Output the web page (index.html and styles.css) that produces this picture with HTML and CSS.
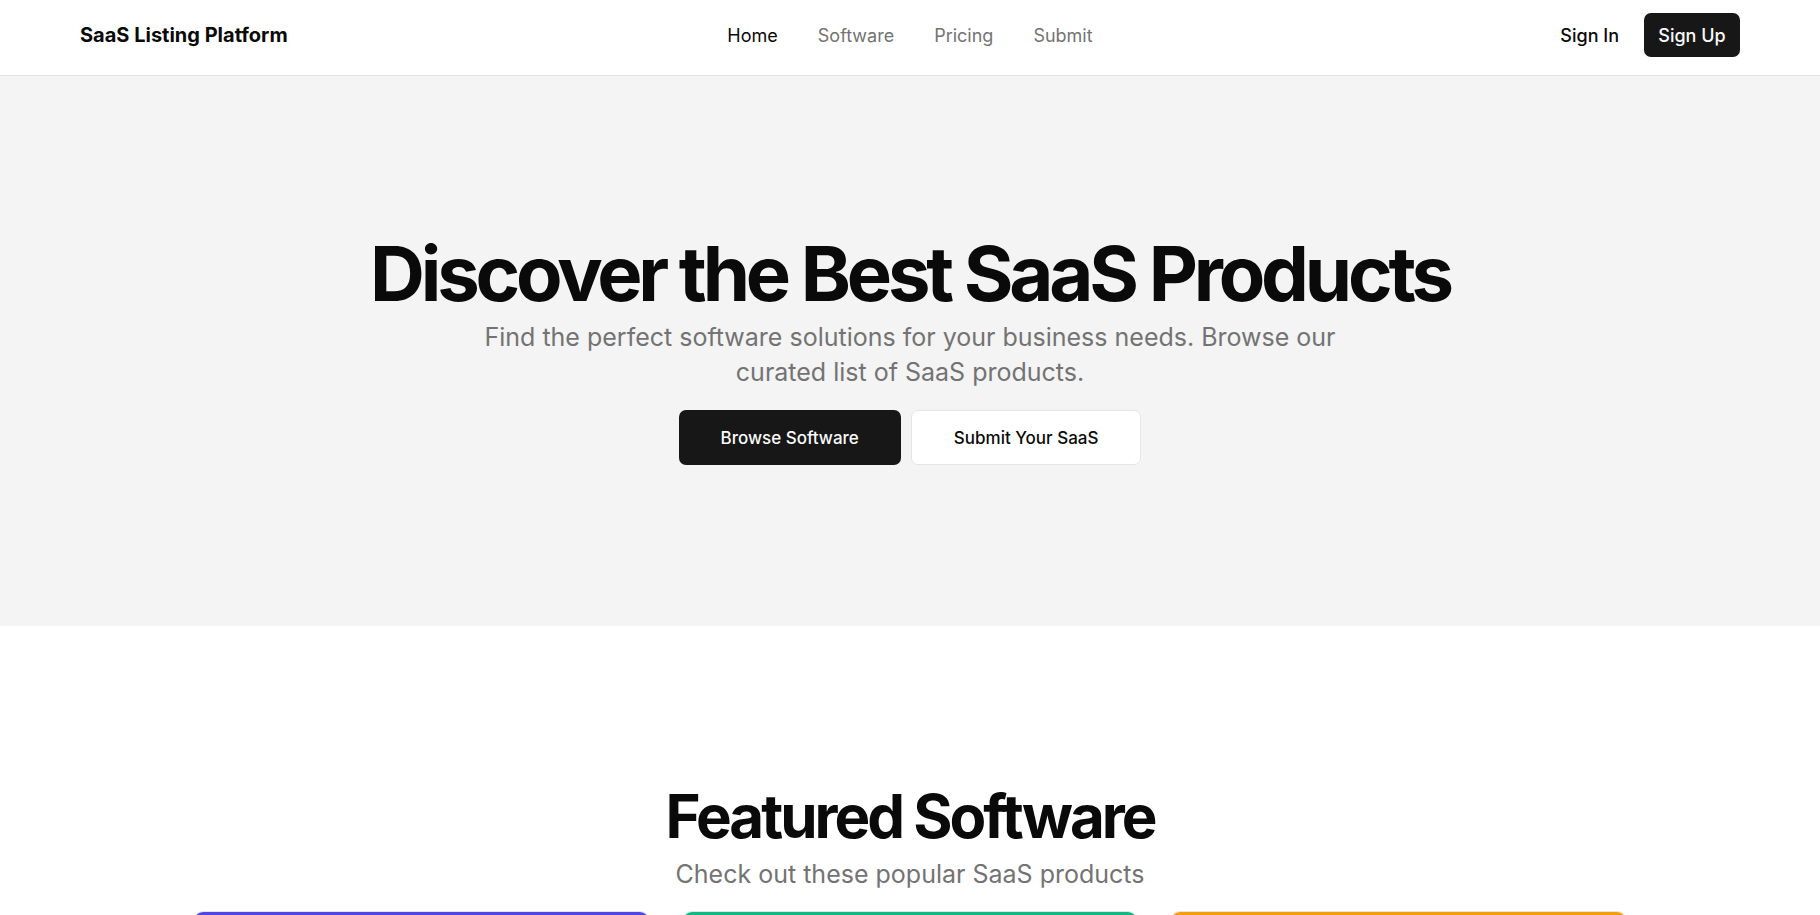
FILE: index.html
```html
<!DOCTYPE html>
<html lang="en">
<head>
    <meta charset="UTF-8">
    <meta name="viewport" content="width=device-width, initial-scale=1.0">
    <title>SaaS Listing Platform</title>
    <link rel="stylesheet" href="styles.css">
</head>
<body>
    <!-- Header Section -->
    <header class="site-header">
        <a class="logo" href="#">SaaS Listing Platform</a>
        <ul class="nav">
            <li><a class="active" href="#">Home</a></li>
            <li><a href="#">Software</a></li>
            <li><a href="#">Pricing</a></li>
            <li><a href="#">Submit</a></li>
        </ul>
        <div class="auth">
            <a class="sign-in" href="#">Sign In</a>
            <a class="btn btn-dark btn-small" href="#">Sign Up</a>
        </div>
    </header>

    <!-- Hero Section -->
    <section class="hero">
        <h1>Discover the Best SaaS Products</h1>
        <p class="hero-text">Find the perfect software solutions for your business needs. Browse our curated list of SaaS products.</p>
        <div class="hero-actions">
            <a class="btn btn-dark" href="#">Browse Software</a>
            <a class="btn btn-light" href="#">Submit Your SaaS</a>
        </div>
    </section>

    <!-- Featured Section -->
    <section class="featured">
        <h2>Featured Software</h2>
        <p class="featured-text">Check out these popular SaaS products</p>
        <div class="card-grid">
            <div class="card">
                <div class="card-bar purple"></div>
                <div class="card-body"></div>
            </div>
            <div class="card">
                <div class="card-bar green"></div>
                <div class="card-body"></div>
            </div>
            <div class="card">
                <div class="card-bar orange"></div>
                <div class="card-body"></div>
            </div>
        </div>
    </section>
</body>
</html>
```

FILE: styles.css
```css
body {
    font-family: Inter, "Noto Sans", sans-serif;
    margin: 0;
    padding: 0;
    color: #0a0a0a;
    background-color: #fff;
}

a {
    text-decoration: none;
    color: inherit;
}

.site-header {
    height: 75px;
    box-sizing: content-box;
    padding: 0 80px;
    border-bottom: 1px solid #e5e5e5;
    display: grid;
    grid-template-columns: 1fr auto 1fr;
    align-items: center;
}

.logo {
    font-size: 20px;
    font-weight: 700;
    color: #0a0a0a;
    margin-bottom: 5px;
}

.nav {
    list-style: none;
    display: flex;
    gap: 40px;
    margin: 0 0 5px;
    padding: 0;
}

.nav a {
    font-size: 18px;
    color: #737373;
}

.nav a.active {
    color: #0a0a0a;
}

.auth {
    display: flex;
    justify-content: flex-end;
    align-items: center;
    gap: 25px;
    margin-bottom: 5px;
}

.sign-in {
    font-size: 18px;
    font-weight: 500;
    color: #0a0a0a;
}

.btn {
    display: inline-flex;
    align-items: center;
    justify-content: center;
    box-sizing: border-box;
    font-size: 17px;
    font-weight: 500;
    border-radius: 7px;
}

.btn-dark {
    background-color: #171717;
    color: #fafafa;
}

.btn-light {
    background-color: #fff;
    color: #0a0a0a;
    border: 1px solid #e5e5e5;
}

.btn-small {
    width: 96px;
    height: 44px;
    font-size: 18px;
}

.hero {
    background-color: #f4f4f4;
    height: 550px;
    box-sizing: border-box;
    padding-top: 159px;
    display: flex;
    flex-direction: column;
    align-items: center;
    text-align: center;
}

.hero h1 {
    margin: 0;
    font-size: 76px;
    line-height: 1;
    font-weight: 700;
    letter-spacing: -0.055em;
}

.hero-text {
    margin: 9px 0 0;
    max-width: 900px;
    font-size: 25px;
    line-height: 35px;
    color: #737373;
}

.hero-actions {
    display: flex;
    gap: 10px;
    margin-top: 20px;
}

.hero-actions .btn {
    height: 55px;
    padding: 0 42px;
}

.featured {
    padding-top: 157px;
    text-align: center;
}

.featured h2 {
    margin: 0;
    font-size: 60px;
    line-height: 1.1;
    font-weight: 700;
    letter-spacing: -0.05em;
}

.featured-text {
    margin: 9px 0 0;
    font-size: 25px;
    line-height: 32px;
    color: #737373;
}

.card-grid {
    width: 1434px;
    margin: 21px auto 0;
    display: grid;
    grid-template-columns: repeat(3, 1fr);
    gap: 32px;
}

.card {
    border: 1px solid #e5e5e5;
    border-radius: 10px;
    overflow: hidden;
    background-color: #fff;
}

.card-bar {
    height: 8px;
}

.card-bar.purple {
    background-color: #4f46e5;
}

.card-bar.green {
    background-color: #10b981;
}

.card-bar.orange {
    background-color: #f59e0b;
}

.card-body {
    height: 300px;
}
```
